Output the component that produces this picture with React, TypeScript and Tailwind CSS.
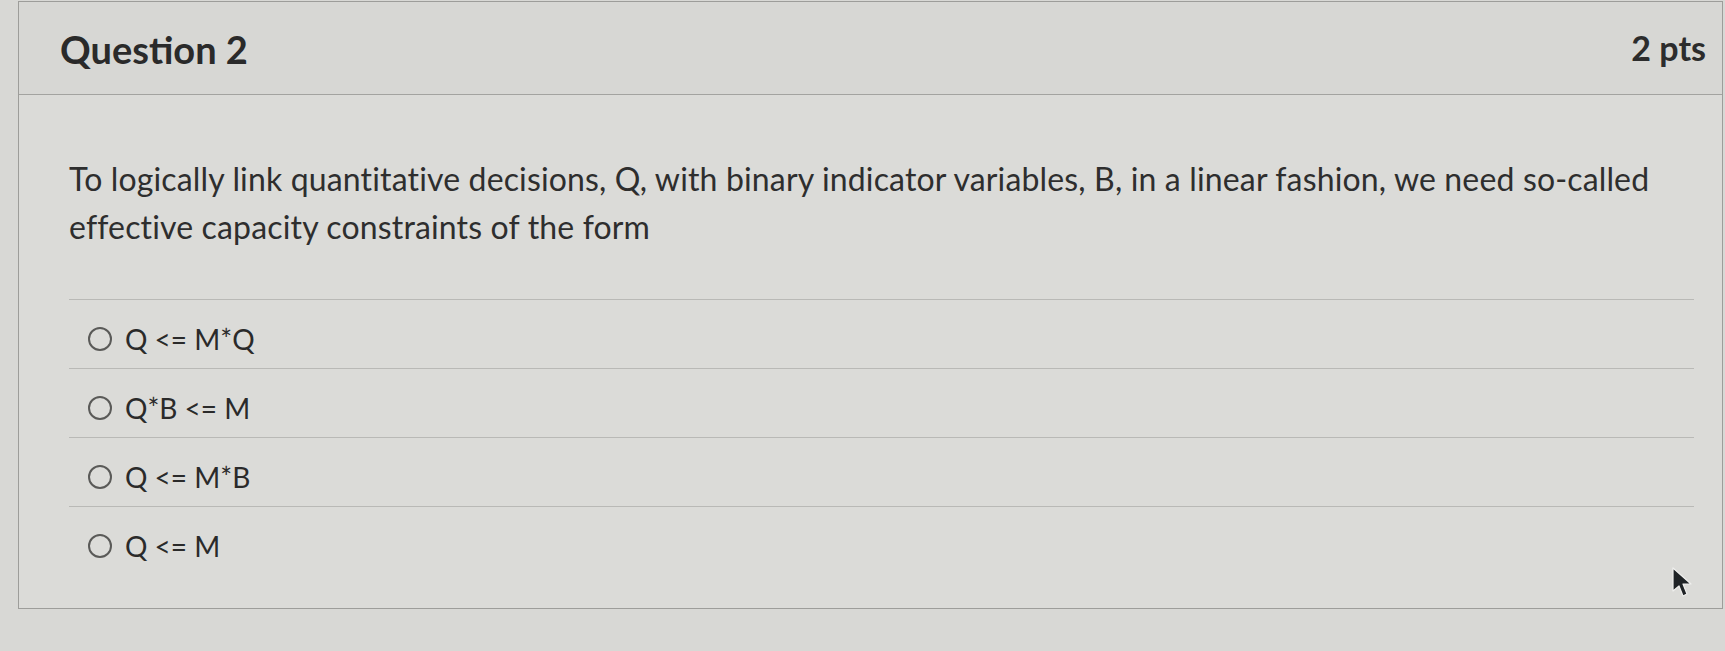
import React from "react";

const options = ["Q <= M*Q", "Q*B <= M", "Q <= M*B", "Q <= M"];

export default function App() {
  return (
    <div className="relative w-[1725px] h-[651px] overflow-hidden bg-[#d8d8d5] pl-[18px] pt-[1px]" style={{ fontFamily: "Lato, 'Open Sans', sans-serif" }}>
      <div className="w-[1705px] h-[608px] border border-[#9d9d9a] bg-[#dbdbd8] flex flex-col">
        <div className="h-[93px] shrink-0 bg-[#d7d7d4] border-b border-[#a3a3a0] flex items-center justify-between pl-[41px] pr-[16px]">
          <span className="text-[38px] font-bold text-[#2a2a2a] leading-none pt-[2px]">Question 2</span>
          <span className="text-[34px] font-bold text-[#2c2c2c] leading-none">2 pts</span>
        </div>
        <div className="pl-[50px] pr-[28px] pt-[60px]">
          <p className="text-[32px] leading-[48px] text-[#2e2e2e] tracking-[0.15px]">
            To logically link quantitative decisions, Q, with binary indicator variables, B, in a linear fashion, we need so-called effective capacity constraints of the form
          </p>
          <div className="mt-[48px] flex flex-col">
            {options.map((o) => (
              <div key={o} className="h-[69px] border-t border-[#b9b9b6] flex items-center pt-[10px] pl-[19px]">
                <span className="w-[24px] h-[24px] rounded-full border-2 border-[#5a5a58] bg-[#dcdcd9] shrink-0" />
                <span className="ml-[13px] text-[28px] text-[#2a2a2a] leading-none">{o}</span>
              </div>
            ))}
          </div>
        </div>
      </div>
      <svg className="absolute left-[1672px] top-[567px]" width="22" height="32" viewBox="0 0 22 32">
        <path d="M1 1 L1 24 L7 19 L11 29 L15 27 L11 17 L19 17 Z" fill="#1f2326" stroke="#f0f0ee" strokeWidth="1.2" strokeLinejoin="round" />
      </svg>
    </div>
  );
}
